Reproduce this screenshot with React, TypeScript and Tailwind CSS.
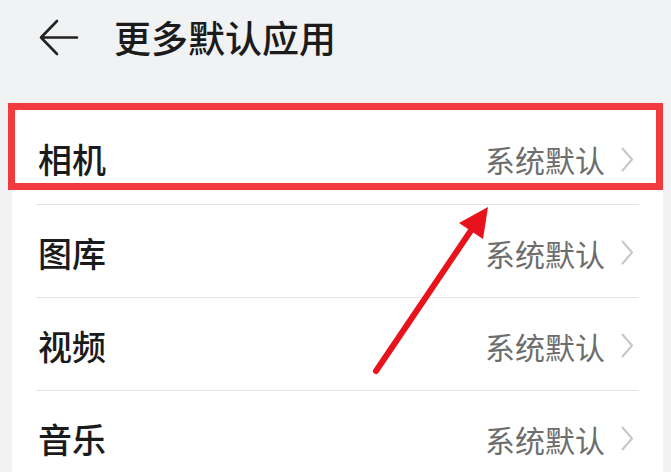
const rows = ["相机", "图库", "视频", "音乐"];

const Chevron = () => (
  <svg width="13" height="25" viewBox="0 0 13 25" fill="none">
    <path d="M1.5 1.5 L11 12.5 L1.5 23.5" stroke="#c6c6c6" strokeWidth="2" strokeLinecap="round" strokeLinejoin="round" />
  </svg>
);

const BackArrow = () => (
  <svg width="40" height="37" viewBox="0 0 40 37" fill="none">
    <path d="M2 18.5 H38 M2 18.5 L18 2 M2 18.5 L18 35" stroke="#222" strokeWidth="2.6" strokeLinecap="round" strokeLinejoin="round" />
  </svg>
);

export default function App() {
  return (
    <div
      className="relative w-[671px] h-[472px] overflow-hidden bg-[#f1f2f4]"
      style={{ fontFamily: '"Noto Sans CJK SC", "Noto Sans", sans-serif' }}
    >
      <div className="flex items-center h-[74px] pl-[39px]">
        <BackArrow />
        <span className="ml-[35px] text-[37px] leading-none font-medium text-[#1b1b1b]">更多默认应用</span>
      </div>

      <div className="mt-[31px] ml-[12px] w-[651px] bg-white rounded-t-[20px] pt-[6px] px-[24px]">
        {rows.map((name, i) => (
          <div
            key={name}
            className={`flex items-center h-[93px] pt-[3px] pl-[2px] pr-[5px] ${i > 0 ? "border-t border-[#e5e5e5]" : ""}`}
          >
            <span className="text-[34px] leading-none font-medium text-[#1b1b1b]">{name}</span>
            <span className="ml-auto text-[30px] leading-none text-[#6d6d6d]">系统默认</span>
            <span className="ml-[16px] flex">
              <Chevron />
            </span>
          </div>
        ))}
      </div>

      {/* annotation box */}
      <div className="absolute left-[8px] top-[103px] w-[655px] h-[87px] border-[7px] border-[#f23a3e]" />

      {/* annotation arrow */}
      <svg className="absolute left-0 top-0" width="671" height="472" viewBox="0 0 671 472">
        <line x1="376" y1="371" x2="474" y2="226" stroke="#e8121c" strokeWidth="6" strokeLinecap="round" />
        <polygon points="488,207 459,223 483,239" fill="#e8121c" />
      </svg>
    </div>
  );
}
